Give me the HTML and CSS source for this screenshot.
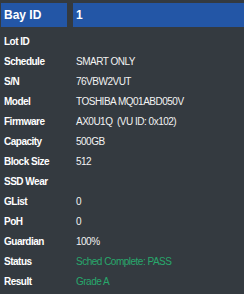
FILE: index.html
```html
<html>
<head>
    <title>Bay Details</title>
    <link rel="stylesheet" href="styles.css">
</head>
<body>
    <div class="bay-panel">
        <div class="bay-head label">Bay ID</div><div class="bay-head value">1</div>
        <div class="label">Lot ID</div><div class="value"></div>
        <div class="label">Schedule</div><div class="value">SMART ONLY</div>
        <div class="label">S/N</div><div class="value">76VBW2VUT</div>
        <div class="label">Model</div><div class="value">TOSHIBA MQ01ABD050V</div>
        <div class="label">Firmware</div><div class="value">AX0U1Q&nbsp; (VU ID: 0x102)</div>
        <div class="label">Capacity</div><div class="value">500GB</div>
        <div class="label">Block Size</div><div class="value">512</div>
        <div class="label">SSD Wear</div><div class="value"></div>
        <div class="label">GList</div><div class="value">0</div>
        <div class="label">PoH</div><div class="value">0</div>
        <div class="label">Guardian</div><div class="value">100%</div>
        <div class="label">Status</div><div class="value pass">Sched Complete: PASS</div>
        <div class="label">Result</div><div class="value pass">Grade A</div>
    </div>
</body>
</html>
```
FILE: styles.css
```css
body { margin: 0; background-color: #343a40; font-family: "Liberation Sans", Arial, sans-serif; color: #fff; }
.bay-panel { display: grid; grid-template-columns: 66px 1fr; column-gap: 6px; grid-template-rows: 28px; grid-auto-rows: 20px; padding: 3px 0 0 1px; }
.label, .value { display: flex; align-items: center; padding-left: 3px; font-size: 10px; letter-spacing: -0.5px; white-space: nowrap; }
.label { font-weight: bold; }
.value { color: #f2f2f2; }
.bay-head { height: 24px; margin-bottom: 4px; background-color: #2356a6; font-size: 12px; letter-spacing: 0; }
.bay-head.value { font-weight: bold; color: #fff; }
.pass { color: #28a86c; }
```
